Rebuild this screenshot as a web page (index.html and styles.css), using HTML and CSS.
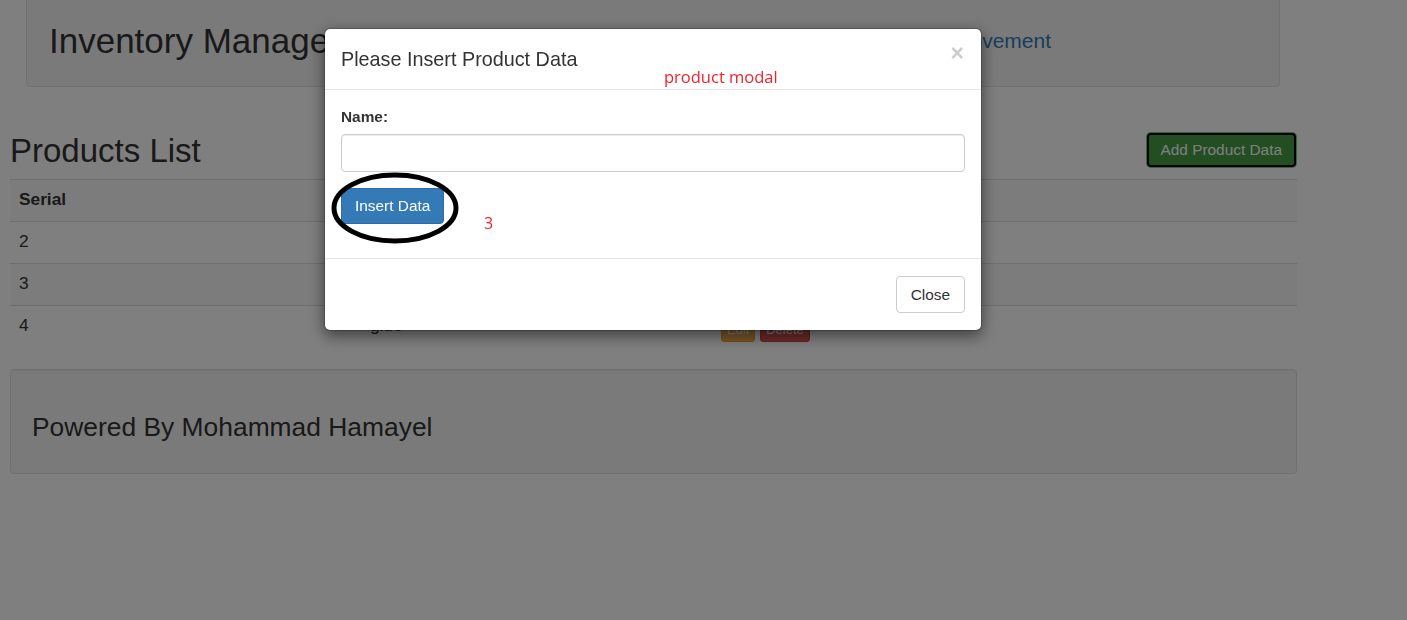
FILE: index.html
```html
<!DOCTYPE html>
<html lang="en">
<head>
<meta charset="utf-8">
<title>Inventory Management</title>
<link rel="stylesheet" href="styles.css">
</head>
<body>
<div class="page">
  <header class="hero">
    <h1 class="hero-title">Inventory Management</h1>
    <nav class="hero-nav">
      <a href="#" class="nav-link">Products</a>
      <a href="#" class="nav-link">Locations</a>
      <a href="#" class="nav-link">Product Movement</a>
    </nav>
  </header>

  <section class="products">
    <div class="products-head">
      <h2 class="products-title">Products List</h2>
      <button class="btn btn-success btn-focus">Add Product Data</button>
    </div>
    <table class="table">
      <colgroup>
        <col class="col-serial">
        <col class="col-name">
        <col class="col-actions">
      </colgroup>
      <tbody>
        <tr class="striped">
          <th>Serial</th>
          <th>Product Name</th>
          <th>Actions</th>
        </tr>
        <tr>
          <td>2</td>
          <td>laptop</td>
          <td><button class="btn btn-xs btn-warning">Edit</button> <button class="btn btn-xs btn-danger">Delete</button></td>
        </tr>
        <tr class="striped">
          <td>3</td>
          <td>mouse</td>
          <td><button class="btn btn-xs btn-warning">Edit</button> <button class="btn btn-xs btn-danger">Delete</button></td>
        </tr>
        <tr>
          <td>4</td>
          <td>glue</td>
          <td><button class="btn btn-xs btn-warning">Edit</button> <button class="btn btn-xs btn-danger">Delete</button></td>
        </tr>
      </tbody>
    </table>
  </section>

  <footer class="footer-well">
    <h3 class="footer-text">Powered By Mohammad Hamayel</h3>
  </footer>
</div>

<div class="backdrop"></div>

<div class="modal">
  <div class="modal-header">
    <h4 class="modal-title">Please Insert Product Data</h4>
    <span class="modal-close">&times;</span>
    <span class="note note-modal">product modal</span>
  </div>
  <div class="modal-body">
    <label class="field-label">Name:</label>
    <input class="form-control" type="text">
    <button class="btn btn-primary btn-insert">Insert Data</button>
    <svg class="circle-mark" width="130" height="74" viewBox="0 0 130 74">
      <ellipse cx="64" cy="36" rx="61" ry="33" fill="none" stroke="#000" stroke-width="5"/>
    </svg>
    <span class="note note-three">3</span>
  </div>
  <div class="modal-footer">
    <button class="btn btn-default">Close</button>
  </div>
</div>
</body>
</html>
```

FILE: styles.css
```css
* { box-sizing: border-box; }

html, body { margin: 0; padding: 0; }

body {
  font-family: "Liberation Sans", Arial, Helvetica, sans-serif;
  font-size: 15.4px;
  line-height: 1.42857;
  color: #333;
  background: #fff;
  width: 1407px;
  height: 620px;
  overflow: hidden;
}

.page {
  width: 1287px;
  margin-left: 10px;
}

/* header well */
.hero {
  margin: -10px 17px 0 16px;
  height: 97px;
  display: flex;
  align-items: center;
  padding: 4px 228px 0 22px;
  background: #f5f5f5;
  border: 1px solid #e3e3e3;
  border-radius: 4px;
  box-shadow: inset 0 1px 1px rgba(0,0,0,.05);
}

.hero-title {
  margin: 0;
  font-size: 35px;
  font-weight: 400;
  line-height: 1.1;
  padding-top: 2px;
}

.hero-nav {
  margin-left: auto;
  display: flex;
  gap: 30px;
}

.nav-link {
  color: #337ab7;
  text-decoration: none;
  font-size: 21px;
}

/* products */
.products-head {
  display: flex;
  align-items: center;
  justify-content: space-between;
  margin-top: 45px;
  height: 36px;
}

.products-title {
  margin: 0;
  font-size: 33px;
  font-weight: 400;
  line-height: 1.1;
  padding-top: 2px;
}

.btn {
  font-family: inherit;
  display: inline-block;
  border: 1px solid transparent;
  border-radius: 4px;
  font-size: 15.4px;
  line-height: 1.42857;
  padding: 6px 13px;
  cursor: pointer;
}

.btn-success {
  color: #fff;
  background: #449d44;
  border-color: #255625;
}

.btn-focus {
  height: 34px;
  margin-right: 1px;
  padding: 0 12px;
  border: 2px solid #000;
  box-shadow: 0 0 0 1px #74c474;
  border-radius: 4px;
}

.table {
  width: 100%;
  margin-top: 11px;
  border-collapse: collapse;
  border-spacing: 0;
  font-size: 17.3px;
}

.col-serial { width: 351px; }
.col-name { width: 351px; }

.table th,
.table td {
  height: 42px;
  padding: 0 9px 3px;
  text-align: left;
  vertical-align: middle;
  border-top: 1px solid #ddd;
}

.table th { font-weight: 700; }

.table tr.striped { background: #f9f9f9; }

.btn-xs {
  font-size: 13px;
  line-height: 1.5;
  padding: 1px 5px;
  border-radius: 3px;
  margin-top: 9px;
}

.btn-warning { color: #fff; background: #f0ad4e; border-color: #eea236; }
.btn-danger { color: #fff; background: #d9534f; border-color: #d43f3a; }

/* footer */
.footer-well {
  margin-top: 21px;
  height: 105px;
  display: flex;
  align-items: center;
  padding: 0 21px;
  background: #f5f5f5;
  border: 1px solid #e3e3e3;
  border-radius: 4px;
  box-shadow: inset 0 1px 1px rgba(0,0,0,.05);
}

.footer-text {
  margin: 0;
  font-size: 26.4px;
  font-weight: 400;
  line-height: 1.1;
  padding-top: 13px;
}

/* modal */
.backdrop {
  position: fixed;
  inset: 0;
  background: rgba(0,0,0,.5);
}

.modal {
  position: fixed;
  left: 324px;
  top: 28px;
  width: 658px;
  background: #fff;
  border: 1px solid rgba(0,0,0,.2);
  border-radius: 6px;
  box-shadow: 0 5px 15px rgba(0,0,0,.5);
  background-clip: padding-box;
}

.modal-header {
  position: relative;
  height: 61px;
  padding: 0 16px;
  display: flex;
  align-items: center;
  border-bottom: 1px solid #e5e5e5;
}

.modal-title {
  margin: 0;
  font-size: 19.8px;
  font-weight: 400;
  line-height: 1.42857;
}

.modal-close {
  position: absolute;
  right: 17px;
  top: 13px;
  font-size: 23px;
  font-weight: 700;
  line-height: 1;
  color: #000;
  opacity: .2;
}

.note {
  position: absolute;
  font-family: "Open Sans", "Noto Sans", sans-serif;
  color: #f2212b;
  font-size: 16.5px;
  line-height: 1;
}

.note-modal {
  left: 339px;
  top: 40px;
}

.modal-body {
  position: relative;
  padding: 16px 16px 34px;
}

.field-label {
  display: block;
  font-weight: 700;
  line-height: 20px;
  margin-bottom: 7px;
  padding-top: 1px;
}

.form-control {
  display: block;
  width: 100%;
  height: 38px;
  padding: 6px 12px;
  font-family: inherit;
  font-size: 15.4px;
  border: 1px solid #ccc;
  border-radius: 4px;
  box-shadow: inset 0 1px 1px rgba(0,0,0,.075);
  margin-bottom: 16px;
}

.btn-primary {
  color: #fff;
  background: #337ab7;
  border-color: #2e6da4;
  padding: 7px 13px;
  line-height: 20px;
}

.btn-insert { display: block; }

.circle-mark {
  position: absolute;
  left: 6px;
  top: 82px;
}

.note-three {
  left: 159px;
  top: 125px;
  font-size: 16px;
}

.modal-footer {
  display: flex;
  justify-content: flex-end;
  padding: 17px 16px 17px;
  border-top: 1px solid #e5e5e5;
}

.btn-default {
  color: #333;
  background: #fff;
  border-color: #ccc;
  padding: 7px 14px;
  line-height: 21px;
  height: 37px;
}
```
